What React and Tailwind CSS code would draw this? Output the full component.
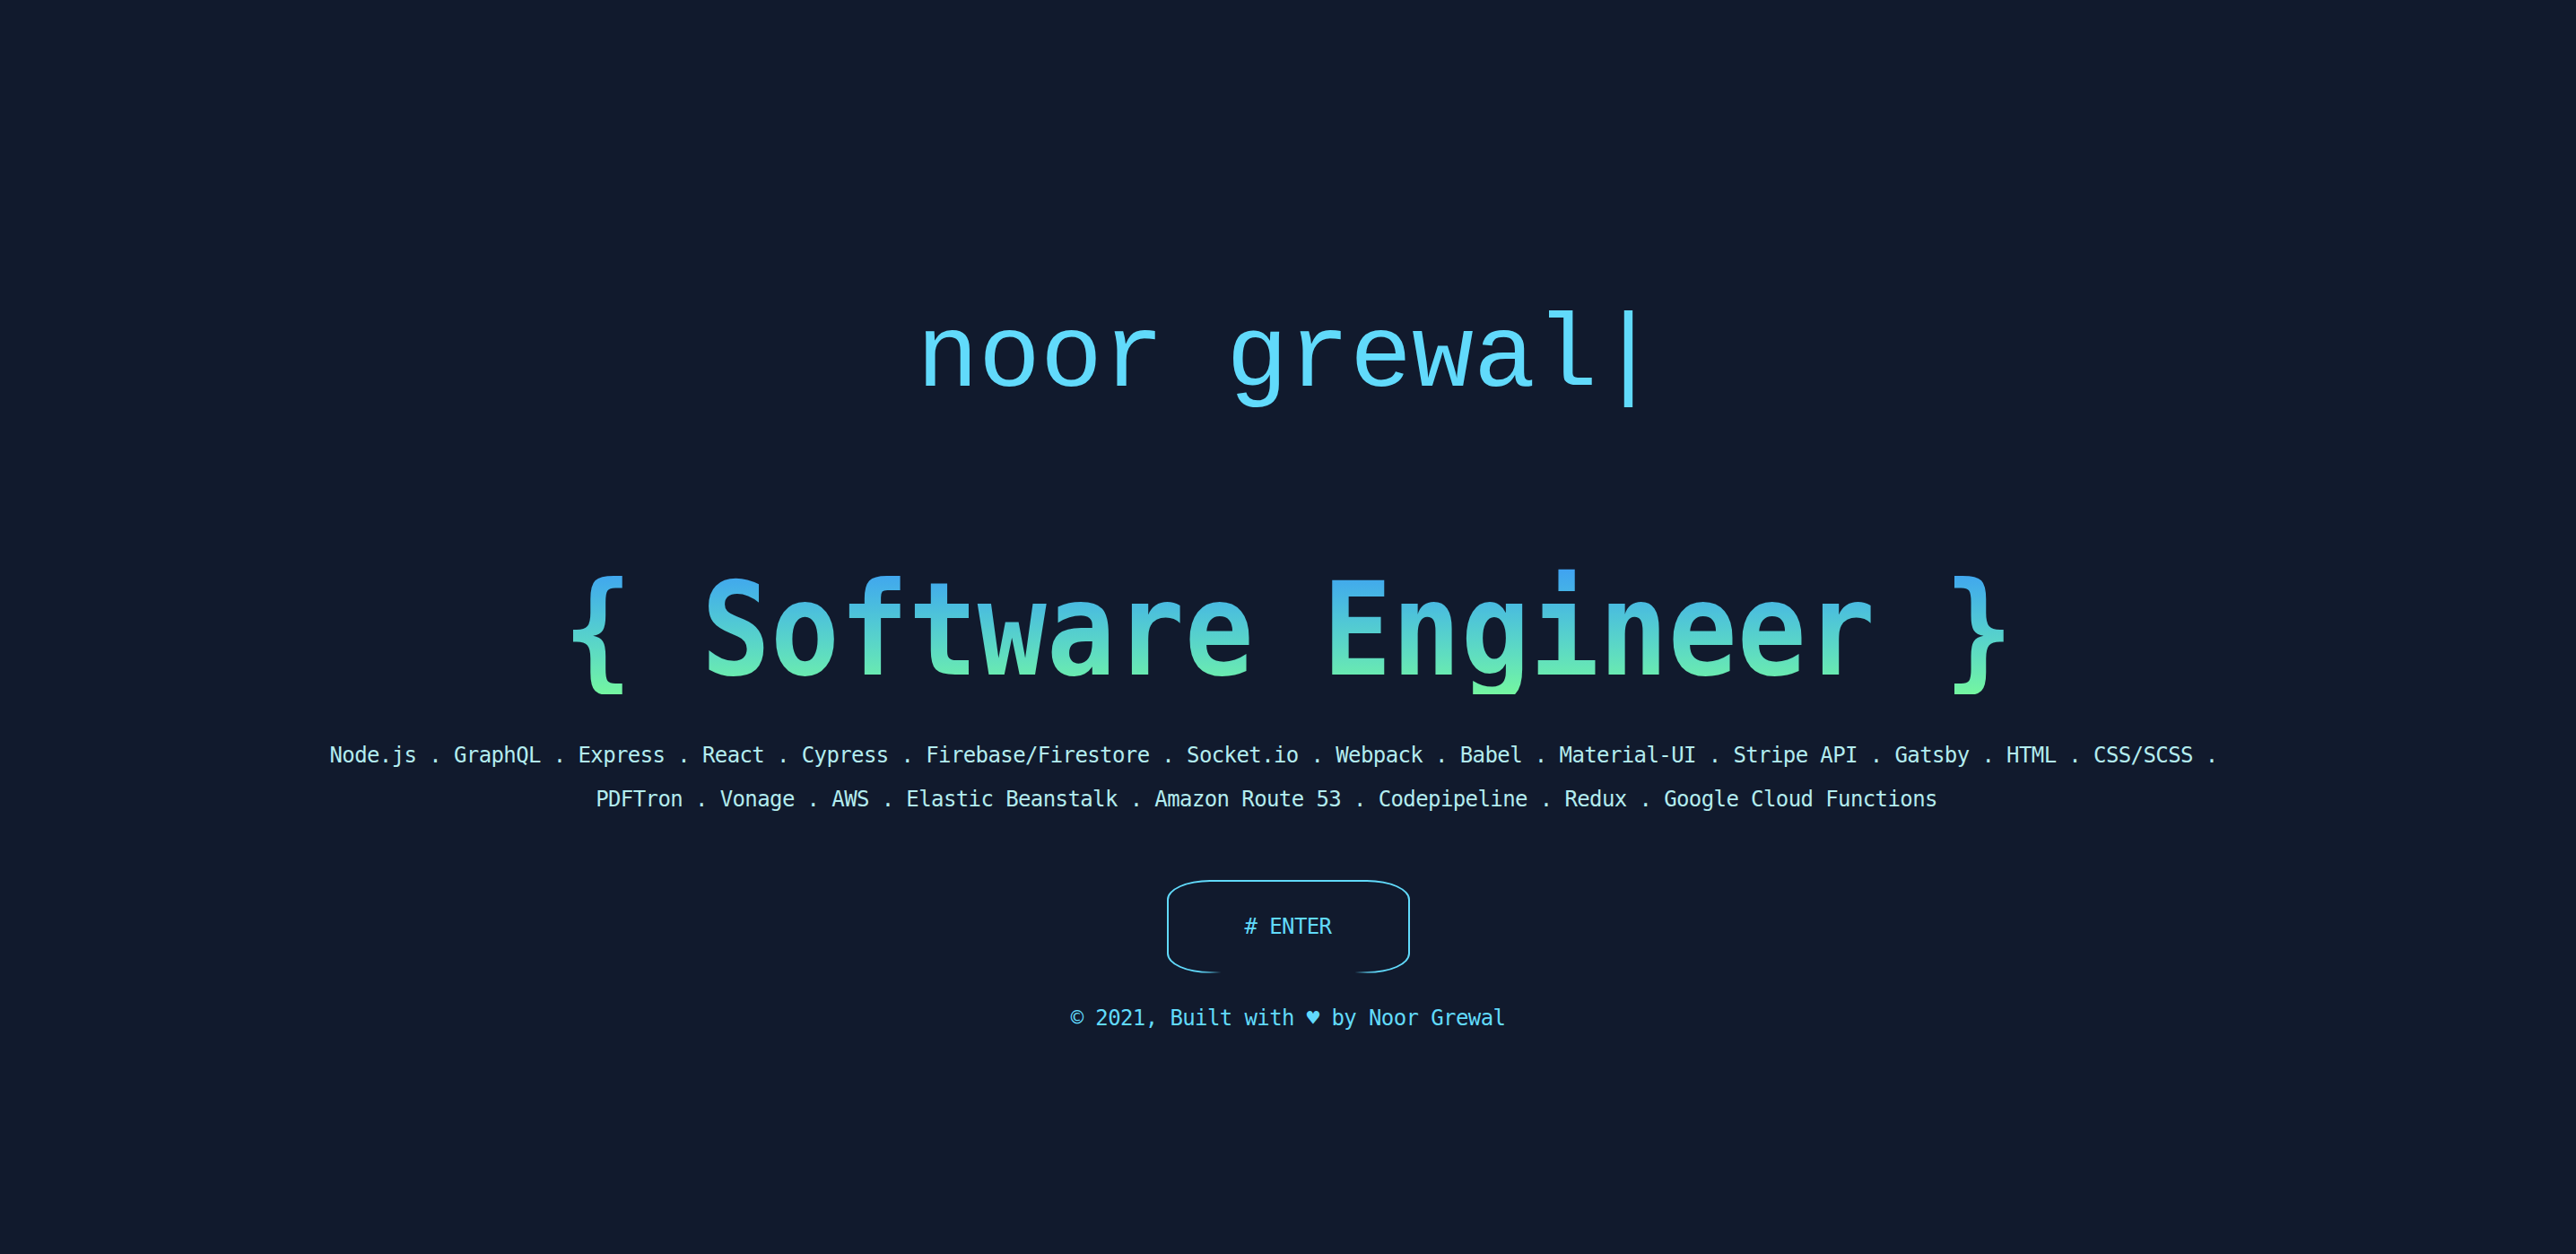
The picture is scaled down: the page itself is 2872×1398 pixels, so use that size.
export default function App() {
  return (
    <div className="w-full h-[1398px] bg-[#111a2d] flex flex-col items-center pt-[342px] overflow-hidden font-[family-name:'DejaVu_Sans_Mono','Liberation_Mono',monospace]">
      <div className="text-[115px] leading-none text-[#61dafb] whitespace-pre font-[family-name:'Liberation_Mono','Courier_New',monospace]">
        noor grewal|
      </div>

      <h1 className="mt-[173px] text-[144px] leading-none font-bold whitespace-pre scale-x-[0.888] bg-linear-to-b from-[#3f9ff3] to-[#74f6a0] bg-clip-text text-transparent">
        {"{ Software Engineer }"}
      </h1>

      <div className="mt-[44px] flex flex-col items-center text-[24px] leading-[49px] tracking-[-0.6px] text-[#b3ecef] whitespace-pre">
        <div className="pr-[32px]">
          Node.js . GraphQL . Express . React . Cypress . Firebase/Firestore . Socket.io . Webpack . Babel . Material-UI . Stripe API . Gatsby . HTML . CSS/SCSS .
        </div>
        <div className="pr-[48px]">
          PDFTron . Vonage . AWS . Elastic Beanstalk . Amazon Route 53 . Codepipeline . Redux . Google Cloud Functions
        </div>
      </div>

      <button className="relative mt-[65px] w-[271px] h-[104px] border-2 border-[#61dafb] rounded-[48px/22px] flex items-center justify-center text-[24px] leading-none tracking-[-0.6px] text-[#61dafb] bg-transparent font-[family-name:'DejaVu_Sans_Mono',monospace]">
        # ENTER
        <span className="absolute -bottom-[3px] left-1/2 -translate-x-1/2 w-[196px] h-[6px] bg-[linear-gradient(90deg,transparent,#111a2d_12%,#111a2d_88%,transparent)]"></span>
      </button>

      <div className="mt-[38px] text-[24px] leading-none tracking-[-0.6px] text-[#61dafb] whitespace-pre">
        © 2021, Built with ♥ by Noor Grewal
      </div>
    </div>
  );
}
